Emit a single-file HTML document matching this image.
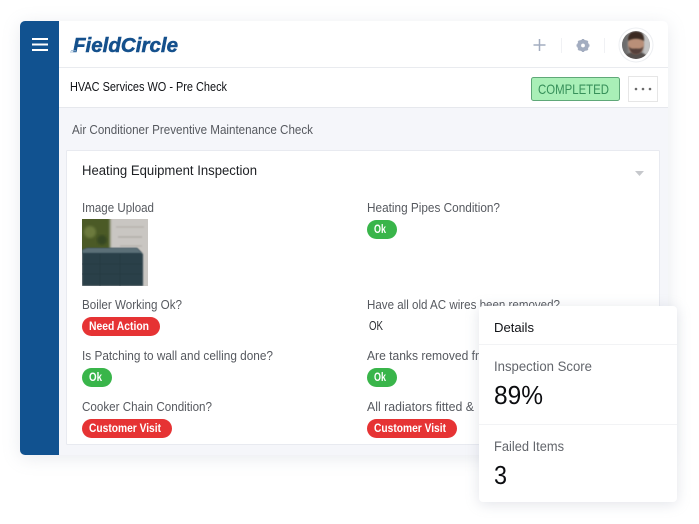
<!DOCTYPE html>
<html><head><meta charset="utf-8"><style>
html,body{margin:0;padding:0;background:#fff;width:699px;height:524px;overflow:hidden}
svg{display:block}
text{font-family:"Liberation Sans",sans-serif}
.l{font-size:13px;fill:#56595f}
.p{font-size:11.5px;font-weight:bold;fill:#fff}
</style></head><body>
<svg width="699" height="524" viewBox="0 0 699 524" xmlns="http://www.w3.org/2000/svg">
<defs>
<filter id="s1" x="-10%" y="-10%" width="120%" height="120%"><feGaussianBlur stdDeviation="9"/></filter>
<filter id="s2" x="-20%" y="-20%" width="140%" height="140%"><feGaussianBlur stdDeviation="7"/></filter>
<filter id="b1"><feGaussianBlur stdDeviation="1.2"/></filter>
<filter id="b2"><feGaussianBlur stdDeviation=".7"/></filter>
<clipPath id="ci"><rect x="82" y="219" width="66" height="67"/></clipPath>
<clipPath id="ca"><circle cx="636" cy="45" r="14"/></clipPath>
</defs>
<rect x="20" y="24" width="648" height="434" rx="6" fill="#9aa3b5" opacity=".22" filter="url(#s1)"/>
<rect x="20" y="21" width="648" height="434" rx="5" fill="#f5f6fa"/>
<path d="M59 21H663a5 5 0 0 1 5 5V108H59Z" fill="#fff"/>
<path d="M25 21H59V455H25a5 5 0 0 1-5-5V26a5 5 0 0 1 5-5Z" fill="#115290"/>
<path d="M32 39H48M32 44.500H48M32 50H48" stroke="#fff" stroke-width="2"/>
<rect x="59" y="67" width="609" height="1" fill="#e9ebef"/>
<rect x="59" y="107" width="609" height="1" fill="#e6e8ed"/>

<!-- logo -->
<text x="73" y="52" font-size="20px" font-weight="bold" font-style="italic" fill="#14508c" stroke="#14508c" stroke-width=".5" textLength="105" lengthAdjust="spacingAndGlyphs">FieldCircle</text>
<path d="M70 52H76M71 50.500H76" stroke="#8fb0cf" stroke-width=".8"/>

<!-- header icons -->
<path d="M539.500 39V51M533.500 45H545.500" stroke="#a3adc0" stroke-width="1.500"/>
<rect x="561" y="38" width="1" height="15" fill="#f0f1f4"/>
<rect x="604" y="38" width="1" height="15" fill="#f0f1f4"/>
<circle cx="583" cy="45.500" r="4.200" fill="none" stroke="#a3adc0" stroke-width="3.400"/>
<path d="M583 39V52M576.500 45.500H589.500M578.400 40.900L587.600 50.100M587.600 40.900L578.400 50.100" stroke="#a3adc0" stroke-width="2.200"/>
<circle cx="583" cy="45.500" r="1.900" fill="#fff"/>
<circle cx="636" cy="45" r="17" fill="#fff" stroke="#eceef1" stroke-width="1"/>
<g clip-path="url(#ca)">
<circle cx="636" cy="45" r="14" fill="#8f8f8f"/>
<rect x="620" y="31" width="8" height="28" fill="#6d6d6d" filter="url(#b1)"/>
<rect x="643" y="31" width="8" height="28" fill="#c4c4c4" filter="url(#b1)"/>
<path d="M623 60C624 54 630 52 636 52C643 52 648 55 649 60Z" fill="#55504e" filter="url(#b2)"/>
<ellipse cx="636" cy="44" rx="8" ry="10" fill="#b98f78" filter="url(#b2)"/>
<path d="M628 41C627.500 33 632 31.500 636 31.500C641 31.500 644.500 34 644 41C640 38 632 38 628 41Z" fill="#3a2b24" filter="url(#b2)"/>
<path d="M628.500 46C630 53 633 54.500 636 54.500C639 54.500 642 53 643.500 46C641 49.500 639 48.500 636 48.500C633 48.500 631 49.500 628.500 46Z" fill="#54413a" filter="url(#b2)"/>
<path d="M630 43.500H634M638 43.500H642" stroke="#4a3a34" stroke-width="1.300" filter="url(#b2)"/>
</g>

<text x="70" y="91" font-size="12.500px" fill="#101216" textLength="157" lengthAdjust="spacingAndGlyphs">HVAC Services WO - Pre Check</text>
<rect x="531.500" y="77.500" width="88" height="23" rx="2" fill="#a9efb7" stroke="#5fa878"/>
<text x="538" y="94" font-size="14px" fill="#37905a" textLength="71" lengthAdjust="spacingAndGlyphs">COMPLETED</text>
<rect x="628.500" y="76.500" width="29" height="25" fill="#fff" stroke="#e6e6e6"/>
<circle cx="636" cy="89" r="1.300" fill="#6b6b6b"/><circle cx="643" cy="89" r="1.300" fill="#6b6b6b"/><circle cx="650" cy="89" r="1.300" fill="#6b6b6b"/>

<text x="72" y="134" class="l" textLength="241" lengthAdjust="spacingAndGlyphs">Air Conditioner Preventive Maintenance Check</text>

<!-- card -->
<rect x="66.500" y="150.500" width="593" height="294" rx="1" fill="#fff" stroke="#e8eaf0"/>
<text x="82" y="175" font-size="13.500px" fill="#1e2024" textLength="175" lengthAdjust="spacingAndGlyphs">Heating Equipment Inspection</text>
<path d="M635 171H644L639.500 176Z" fill="#c6c8cc"/>

<text x="82" y="212" class="l" textLength="72" lengthAdjust="spacingAndGlyphs">Image Upload</text>
<g clip-path="url(#ci)">
<rect x="82" y="219" width="66" height="67" fill="#c9c6c2"/>
<rect x="76" y="213" width="34" height="40" fill="#4b5a27" filter="url(#b1)"/>
<circle cx="90" cy="232" r="6" fill="#6c7a3c" filter="url(#b1)"/>
<circle cx="102" cy="240" r="5" fill="#364720" filter="url(#b1)"/>
<rect x="116" y="226" width="28" height="2" fill="#bbb7b2" filter="url(#b2)"/>
<rect x="118" y="236" width="24" height="2" fill="#b6b2ad" filter="url(#b2)"/>
<rect x="120" y="245" width="22" height="2" fill="#bbb7b2" filter="url(#b2)"/>
<path d="M82 250L87 248H137L143 254V286H82Z" fill="#2b4049" filter="url(#b2)"/>
<path d="M82 250L87 248H137L142 253H82Z" fill="#5c7078" filter="url(#b2)"/>
<path d="M82 264H142M82 274H142M100 254V286M120 254V286" stroke="#243740" stroke-width=".5"/>
</g>
<text x="82" y="309" class="l" textLength="100" lengthAdjust="spacingAndGlyphs">Boiler Working Ok?</text>
<rect x="82" y="317" width="78" height="19" rx="9.500" fill="#e63334"/>
<text x="89" y="330" class="p" textLength="60" lengthAdjust="spacingAndGlyphs">Need Action</text>
<text x="82" y="360" class="l" textLength="191" lengthAdjust="spacingAndGlyphs">Is Patching to wall and celling done?</text>
<rect x="82" y="368" width="30" height="19" rx="9.500" fill="#39b54a"/>
<text x="89" y="381" class="p" textLength="13" lengthAdjust="spacingAndGlyphs">Ok</text>
<text x="82" y="411" class="l" textLength="130" lengthAdjust="spacingAndGlyphs">Cooker Chain Condition?</text>
<rect x="82" y="419" width="90" height="19" rx="9.500" fill="#e63334"/>
<text x="89" y="432" class="p" textLength="72" lengthAdjust="spacingAndGlyphs">Customer Visit</text>

<text x="367" y="212" class="l" textLength="133" lengthAdjust="spacingAndGlyphs">Heating Pipes Condition?</text>
<rect x="367" y="220" width="30" height="19" rx="9.500" fill="#39b54a"/>
<text x="374" y="233" class="p" textLength="12" lengthAdjust="spacingAndGlyphs">Ok</text>
<text x="367" y="309" class="l" textLength="193" lengthAdjust="spacingAndGlyphs">Have all old AC wires been removed?</text>
<text x="369" y="330" font-size="12.500px" fill="#2a2c30" textLength="14" lengthAdjust="spacingAndGlyphs">OK</text>
<text x="367" y="360" class="l" textLength="112" lengthAdjust="spacingAndGlyphs">Are tanks removed fr</text>
<rect x="367" y="368" width="30" height="19" rx="9.500" fill="#39b54a"/>
<text x="374" y="381" class="p" textLength="12" lengthAdjust="spacingAndGlyphs">Ok</text>
<text x="367" y="411" class="l" textLength="107" lengthAdjust="spacingAndGlyphs">All radiators fitted &amp;</text>
<rect x="367" y="419" width="90" height="19" rx="9.500" fill="#e63334"/>
<text x="374" y="432" class="p" textLength="72" lengthAdjust="spacingAndGlyphs">Customer Visit</text>

<!-- details -->
<rect x="479" y="308" width="198" height="196" rx="4" fill="#8a93a8" opacity=".25" filter="url(#s2)"/>
<rect x="479" y="306" width="198" height="196" rx="4" fill="#fff"/>
<rect x="479" y="344" width="198" height="1" fill="#f2f3f5"/>
<rect x="479" y="424" width="198" height="1" fill="#f2f3f5"/>
<text x="494" y="332" font-size="12.500px" fill="#111317" textLength="40" lengthAdjust="spacingAndGlyphs">Details</text>
<text x="494" y="371" font-size="13.500px" fill="#63666c" textLength="98" lengthAdjust="spacingAndGlyphs">Inspection Score</text>
<text x="494" y="404" font-size="26px" fill="#0c0d10" textLength="49" lengthAdjust="spacingAndGlyphs">89%</text>
<text x="494" y="451" font-size="13.500px" fill="#63666c" textLength="70" lengthAdjust="spacingAndGlyphs">Failed Items</text>
<text x="494" y="484" font-size="26px" fill="#0c0d10" textLength="13" lengthAdjust="spacingAndGlyphs">3</text>
</svg>
</body></html>
